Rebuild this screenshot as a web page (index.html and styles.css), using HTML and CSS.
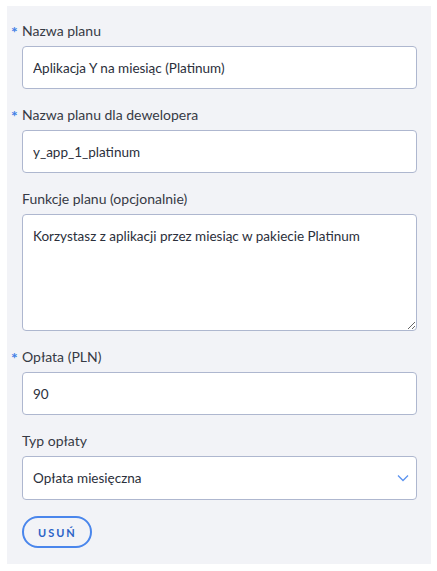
FILE: index.html
```html
<!DOCTYPE html>
<html lang="pl">
<head>
<meta charset="utf-8">
<link rel="stylesheet" href="styles.css">
</head>
<body>
<form class="panel">
  <div class="field">
    <label class="label"><span class="req">*</span>Nazwa planu</label>
    <input class="control" type="text" value="Aplikacja Y na miesiąc (Platinum)">
  </div>
  <div class="field">
    <label class="label"><span class="req">*</span>Nazwa planu dla dewelopera</label>
    <input class="control" type="text" value="y_app_1_platinum">
  </div>
  <div class="field">
    <label class="label">Funkcje planu (opcjonalnie)</label>
    <textarea class="control area">Korzystasz z aplikacji przez miesiąc w pakiecie Platinum</textarea>
  </div>
  <div class="field">
    <label class="label"><span class="req">*</span>Opłata (PLN)</label>
    <input class="control" type="text" value="90">
  </div>
  <div class="field">
    <label class="label">Typ opłaty</label>
    <div class="control select">
      <span>Opłata miesięczna</span>
      <svg class="chev" width="12" height="8" viewBox="0 0 12 8"><path d="M1 1.5 L6 6.5 L11 1.5" fill="none" stroke="#5b93ef" stroke-width="1.3"/></svg>
    </div>
  </div>
  <div class="actions">
    <button type="button" class="btn">USUŃ</button>
  </div>
</form>
</body>
</html>
```
FILE: styles.css
```css
html, body {
  margin: 0;
  background: #ffffff;
}
body {
  font-family: "Lato", "Liberation Sans", sans-serif;
  color: #2f3340;
}
.panel {
  box-sizing: border-box;
  width: 424px;
  margin: 6px 0 0 7px;
  padding: 15px 14px 16px 15px;
  background: #f2f3f7;
  display: flex;
  flex-direction: column;
  gap: 16px;
}
.field {
  display: flex;
  flex-direction: column;
  gap: 5px;
}
.label {
  display: block;
  height: 20px;
  font-size: 14px;
  line-height: 20px;
  color: #363a45;
}
.req {
  display: inline-block;
  width: 11px;
  margin-left: -11px;
  color: #3f7fe6;
  font-weight: 700;
  font-size: 16px;
  line-height: 0;
  vertical-align: -2px;
}
.control {
  box-sizing: border-box;
  width: 395px;
  height: 43px;
  margin: 0;
  padding: 0 10px;
  border: 1px solid #aeb7cf;
  border-radius: 4px;
  background: #ffffff;
  font-family: "Lato", "Liberation Sans", sans-serif;
  font-size: 13.5px;
  color: #2b2f3b;
  outline: none;
}
.area {
  height: 117px;
  padding: 11px 10px;
  line-height: 20px;
  resize: vertical;
  display: block;
}
.select {
  height: 44px;
  display: flex;
  align-items: center;
  justify-content: space-between;
  padding: 0 7px 0 10px;
}
.chev {
  display: block;
}
.actions {
  display: flex;
}
.btn {
  box-sizing: border-box;
  height: 32px;
  padding: 0 13px 0 14px;
  border: 2px solid #4a86ec;
  border-radius: 16px;
  background: transparent;
  font-family: "Lato", "Liberation Sans", sans-serif;
  font-weight: 700;
  font-size: 11px;
  letter-spacing: 2px;
  color: #2a62c6;
}
```
